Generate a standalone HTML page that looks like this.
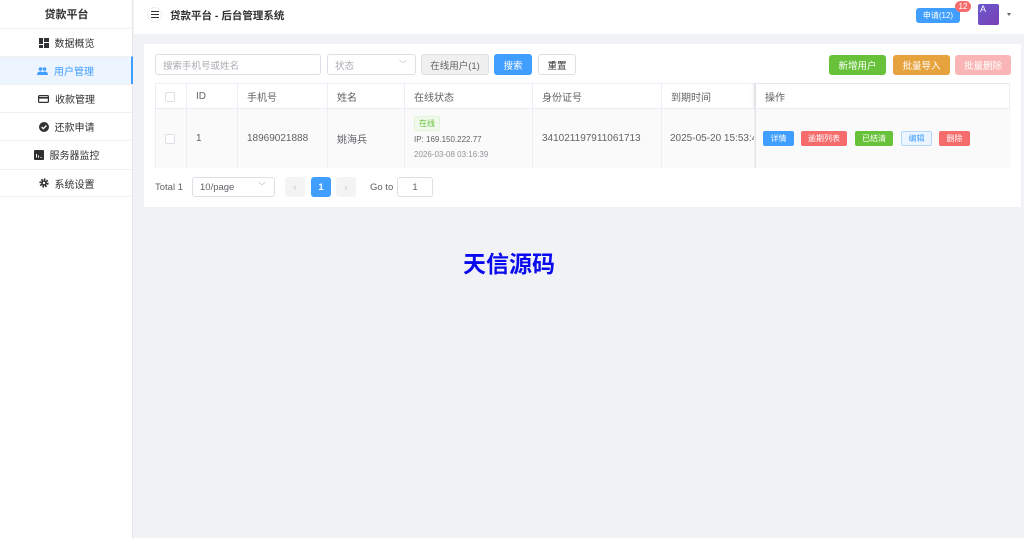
<!DOCTYPE html>
<html><head><meta charset="utf-8"><style>
*{box-sizing:border-box;margin:0;padding:0}
body{width:1024px;height:538px;overflow:hidden;background:#f0f2f5;font-family:"Liberation Sans","Noto Sans CJK SC",sans-serif;font-size:10px;color:#606266;position:relative}
.a{position:absolute}
.side{left:0;top:0;width:133px;height:538px;background:#fff;border-right:1px solid #e6e6e6}
.mi{position:absolute;left:0;width:133px;height:28px;border-top:1px solid #f0f0f0;display:flex;align-items:center;justify-content:center;font-size:10px;color:#303133}
.mi svg{margin-right:6px}
.hdr{left:134px;top:0;width:890px;height:34px;background:#fff}
.card{left:144px;top:44px;width:877px;height:163px;background:#fff}
.inp{border:1px solid #dcdfe6;border-radius:3px;background:#fff;color:#a8abb2;display:flex;align-items:center;padding-left:7px;font-size:9.5px}
.btn{border-radius:3px;display:flex;align-items:center;justify-content:center;font-size:9.5px;color:#fff}
.tb{left:155px;top:83px;width:855px;height:85px;border:1px solid #ebeef5}
.th{position:absolute;top:0;height:25px;display:flex;align-items:center;padding-left:9px;font-size:10px;color:#606266;border-right:1px solid #ebeef5;white-space:nowrap}
.td{position:absolute;top:25px;height:59px;display:flex;align-items:center;padding-left:9px;font-size:10px;color:#606266;border-right:1px solid #ebeef5;background:#fafafa;white-space:nowrap;overflow:hidden}
.cb{width:10px;height:10px;border:1px solid #dcdfe6;border-radius:2px;background:#fff}
.sb{height:15px;border-radius:2px;font-size:8px;color:#fff;display:flex;align-items:center;justify-content:center;position:absolute;top:131px}
</style></head><body>
<div class="a side">
 <div class="a" style="left:0;top:6px;width:133px;text-align:center;font-size:11px;font-weight:bold;color:#303133">贷款平台</div>
 <div class="mi" style="top:28px"><svg width="10" height="10" viewBox="0 0 10 10"><rect x="0" y="0" width="4" height="6" fill="#303133"/><rect x="5" y="0" width="5" height="4" fill="#303133"/><rect x="0" y="7" width="4" height="3" fill="#303133"/><rect x="5" y="5" width="5" height="5" fill="#303133"/></svg>数据概览</div>
 <div class="mi" style="top:56px;background:#ecf5ff;color:#409eff;border-right:2px solid #409eff"><svg width="11" height="8" viewBox="0 0 11 8"><circle cx="3.5" cy="2" r="1.8" fill="#409eff"/><circle cx="7.5" cy="2" r="1.8" fill="#409eff"/><path d="M0 8 Q0 4.5 3.5 4.5 Q7 4.5 7 8Z M5 8 Q5 4.5 7.5 4.5 Q11 4.5 11 8Z" fill="#409eff"/></svg>用户管理</div>
 <div class="mi" style="top:84px"><svg width="11" height="8" viewBox="0 0 11 8"><rect x="0.6" y="0.6" width="9.8" height="6.8" rx="1" fill="none" stroke="#303133" stroke-width="1.2"/><rect x="0.6" y="2" width="9.8" height="1.6" fill="#303133"/></svg>收款管理</div>
 <div class="mi" style="top:112px"><svg width="10" height="10" viewBox="0 0 10 10"><circle cx="5" cy="5" r="5" fill="#303133"/><path d="M2.6 5 L4.3 6.7 L7.5 3.5" stroke="#fff" stroke-width="1.3" fill="none"/></svg>还款申请</div>
 <div class="mi" style="top:140px"><svg width="10" height="10" viewBox="0 0 10 10"><rect width="10" height="10" rx="1" fill="#303133"/><path d="M2.5 7.5V4M4.5 7.5V5.5M6.5 7.5H7.5" stroke="#fff" stroke-width="1"/></svg>服务器监控</div>
 <div class="mi" style="top:169px;border-bottom:1px solid #f0f0f0"><svg width="10" height="10" viewBox="0 0 10 10"><circle cx="5" cy="5" r="3.5" fill="none" stroke="#303133" stroke-width="2.2" stroke-dasharray="1.6 1.1"/><circle cx="5" cy="5" r="2.8" fill="#303133"/><circle cx="5" cy="5" r="1.2" fill="#fff"/></svg>系统设置</div>
</div>
<div class="a hdr">
 <div class="a" style="left:13px;top:7px;width:15px;height:15px;border-radius:50%;border:1px solid #eee;display:flex;align-items:center;justify-content:center"><svg width="8" height="7" viewBox="0 0 8 7"><path d="M0 .5H8M0 3.5H8M0 6.5H8" stroke="#303133" stroke-width="1"/></svg></div>
 <div class="a" style="left:36px;top:8px;font-size:10.5px;font-weight:bold;color:#303133">贷款平台 - 后台管理系统</div>
 <div class="a btn" style="left:782px;top:8px;width:44px;height:15px;background:#409eff;font-size:8px">申请(12)</div>
 <div class="a" style="left:821px;top:1px;width:16px;height:11px;border-radius:6px;background:#f56c6c;color:#fff;font-size:8px;text-align:center;line-height:11px">12</div>
 <div class="a" style="left:844px;top:4px;width:21px;height:21px;border-radius:2px;background:linear-gradient(135deg,#6a5acd,#7a3fb5);color:#fff;font-size:9px;padding-left:2px">A</div>
 <div class="a" style="left:873px;top:13px;width:0;height:0;border-left:2.5px solid transparent;border-right:2.5px solid transparent;border-top:3px solid #666"></div>
</div>
<div class="a card"></div>
<div class="a inp" style="left:155px;top:54px;width:166px;height:21px">搜索手机号或姓名</div>
<div class="a inp" style="left:327px;top:54px;width:89px;height:21px">状态<span style="position:absolute;right:8px;top:4px;color:#bbb;font-size:8px">﹀</span></div>
<div class="a btn" style="left:421px;top:54px;width:68px;height:21px;background:#f0f0f0;border:1px solid #dcdfe6;color:#606266">在线用户(1)</div>
<div class="a btn" style="left:494px;top:54px;width:38px;height:21px;background:#409eff">搜索</div>
<div class="a btn" style="left:538px;top:54px;width:38px;height:21px;background:#fff;border:1px solid #dcdfe6;color:#303133">重置</div>
<div class="a btn" style="left:829px;top:55px;width:57px;height:20px;background:#67c23a">新增用户</div>
<div class="a btn" style="left:893px;top:55px;width:57px;height:20px;background:#e6a23c">批量导入</div>
<div class="a btn" style="left:955px;top:55px;width:56px;height:20px;background:#fab6b6">批量删除</div>
<div class="a tb">
 <div class="th" style="left:0;width:31px"><div class="cb"></div></div>
 <div class="th" style="left:31px;width:51px">ID</div>
 <div class="th" style="left:82px;width:90px">手机号</div>
 <div class="th" style="left:172px;width:77px">姓名</div>
 <div class="th" style="left:249px;width:128px">在线状态</div>
 <div class="th" style="left:377px;width:129px">身份证号</div>
 <div class="th" style="left:506px;width:93px">到期时间</div>
 <div class="th" style="left:599px;width:255px;border-right:none;border-left:1px solid #e4e4e4;box-shadow:-2px 0 3px rgba(0,0,0,.06)">操作</div>
 <div style="position:absolute;left:0;top:24px;width:853px;border-top:1px solid #ebeef5"></div>
 <div class="td" style="left:0;width:31px"><div class="cb"></div></div>
 <div class="td" style="left:31px;width:51px">1</div>
 <div class="td" style="left:82px;width:90px">18969021888</div>
 <div class="td" style="left:172px;width:77px">姚海兵</div>
 <div class="td" style="left:249px;width:128px;display:block;padding-top:7px">
  <div style="display:inline-block;background:#f0f9eb;border:1px solid #e1f3d8;color:#67c23a;font-size:8px;padding:1px 4px;border-radius:2px">在线</div>
  <div style="font-size:8px;margin-top:4px">IP: 169.150.222.77</div>
  <div style="font-size:8px;margin-top:6px;color:#909399">2026-03-08 03:16:39</div>
 </div>
 <div class="td" style="left:377px;width:129px">341021197911061713</div>
 <div class="td" style="left:506px;width:93px;padding-left:8px">2025-05-20 15:53:47</div>
 <div class="td" style="left:599px;width:255px;border-right:none;border-left:1px solid #e4e4e4"></div>
</div>
<div class="sb" style="left:763px;width:31px;background:#409eff">详情</div>
<div class="sb" style="left:801px;width:46px;background:#f56c6c">逾期列表</div>
<div class="sb" style="left:855px;width:38px;background:#67c23a">已结清</div>
<div class="sb" style="left:901px;width:31px;background:#ecf5ff;border:1px solid #b3d8ff;color:#409eff">编辑</div>
<div class="sb" style="left:939px;width:31px;background:#f56c6c">删除</div>
<div class="a" style="left:155px;top:182px;font-size:9.5px;color:#606266">Total 1</div>
<div class="a inp" style="left:192px;top:177px;width:83px;height:20px;color:#606266">10/page<span style="position:absolute;right:8px;top:3px;color:#bbb;font-size:8px">﹀</span></div>
<div class="a btn" style="left:285px;top:177px;width:20px;height:20px;background:#f4f4f5;color:#c0c4cc">‹</div>
<div class="a btn" style="left:311px;top:177px;width:20px;height:20px;background:#409eff;font-weight:bold">1</div>
<div class="a btn" style="left:336px;top:177px;width:20px;height:20px;background:#f4f4f5;color:#c0c4cc">›</div>
<div class="a" style="left:370px;top:182px;font-size:9.5px;color:#606266">Go to</div>
<div class="a inp" style="left:397px;top:177px;width:36px;height:20px;color:#606266;justify-content:center;padding:0">1</div>
<div class="a" style="left:463px;top:245px;font-size:23px;font-weight:bold;color:#0a0aee;font-family:'Noto Sans CJK SC',sans-serif">天信源码</div>
</body></html>
